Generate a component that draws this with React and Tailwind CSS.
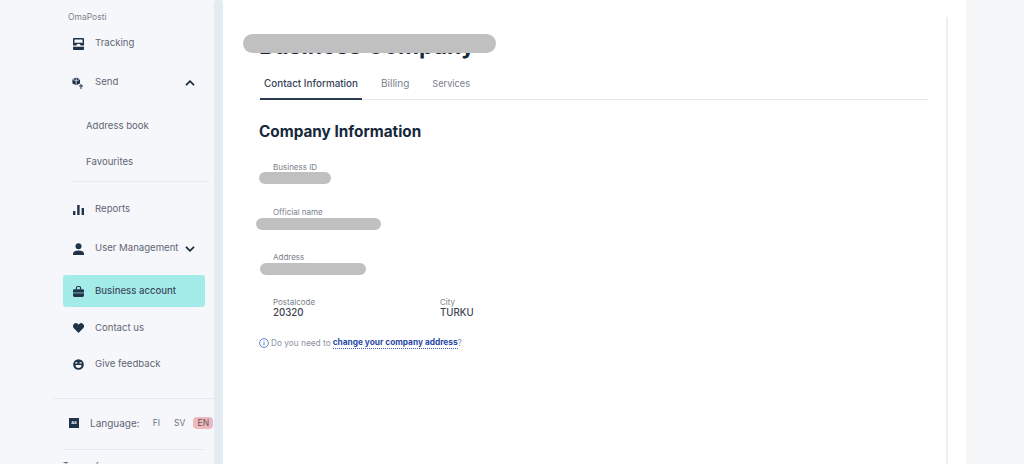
import React from 'react';

const ICON = '#1f3349';

const TrackingIcon = () => (
  <svg width="11" height="12" viewBox="0 0 11 12" fill={ICON}>
    <path d="M1 0h9a1 1 0 0 1 1 1v6.6H7.6L7 6H4L3.4 7.6H0V1a1 1 0 0 1 1-1z" />
    <path d="M1.6 1.4h7.8l.3 3.4H1.3z" fill="#f6f7fb" />
    <path d="M0 8.8h11V11a1 1 0 0 1-1 1H1a1 1 0 0 1-1-1z" />
  </svg>
);

const SendIcon = () => (
  <svg width="12" height="12" viewBox="0 0 12 12" fill={ICON}>
    <path d="M4.2 0.4 8 2.2v4.2L4.2 8.2.4 6.4V2.2z" />
    <path d="M4.2.4v7.8M.4 2.2l3.8 1.8L8 2.2" stroke="#f6f7fb" strokeWidth="0.7" fill="none" />
    <path d="M9.5 7v1.6H11v1H9.5V12h-1V9.6H7v-1h1.5V7z" />
  </svg>
);

const BarsIcon = () => (
  <svg width="11" height="10" viewBox="0 0 11 10" fill={ICON}>
    <rect x="0" y="6" width="2.4" height="4" />
    <rect x="4.2" y="0" width="2.4" height="10" />
    <rect x="8.6" y="3" width="2.4" height="7" />
  </svg>
);

const PersonIcon = () => (
  <svg width="11" height="12" viewBox="0 0 11 12" fill={ICON}>
    <circle cx="5.5" cy="3.2" r="3" />
    <path d="M0 12V10.4C0 8.4 2.5 7.4 5.5 7.4s5.5 1 5.5 3V12z" />
  </svg>
);

const CaseIcon = () => (
  <svg width="11" height="11" viewBox="0 0 11 11" fill={ICON}>
    <path d="M2.8 3.4V2a2 2 0 0 1 2-2h1.4a2 2 0 0 1 2 2v1.4H7.1V2a.9.9 0 0 0-.9-.9H4.8a.9.9 0 0 0-.9.9v1.4z" />
    <path d="M1.4 3.2h8.2A1.4 1.4 0 0 1 11 4.6v5A1.4 1.4 0 0 1 9.6 11H1.4A1.4 1.4 0 0 1 0 9.6v-5a1.4 1.4 0 0 1 1.4-1.4z" />
    <rect x="0" y="6.6" width="11" height="0.7" fill="#a4ecea" />
  </svg>
);

const HeartIcon = () => (
  <svg width="11" height="10" viewBox="0 0 12 11" fill={ICON}>
    <path d="M6 11 .9 5.8A3.1 3.1 0 0 1 5.3 1.2L6 2l.7-.8a3.1 3.1 0 0 1 4.4 4.6z" />
  </svg>
);

const FaceIcon = () => (
  <svg width="11" height="11" viewBox="0 0 12 12">
    <circle cx="6" cy="6" r="5.8" fill={ICON} />
    <rect x="2.4" y="3.6" width="2.6" height="1.4" rx="0.7" fill="#f6f7fb" />
    <rect x="7" y="3.6" width="2.6" height="1.4" rx="0.7" fill="#f6f7fb" />
    <path d="M2.8 6.6h6.4a3.2 3.2 0 0 1-6.4 0z" fill="#f6f7fb" />
  </svg>
);

const Chevron = ({ up }) => (
  <svg width="10" height="6" viewBox="0 0 10 6" fill="none" stroke="#16283a" strokeWidth="1.7">
    <path d={up ? 'M1 5.2 5 1.2l4 4' : 'M1 .8l4 4 4-4'} />
  </svg>
);

const NavRow = ({ icon, label, chevron, height = 'h-[39px]' }) => (
  <div className={`flex w-[132px] items-center ${height}`}>
    <div className="flex w-[32px] justify-center pr-[2px]">{icon}</div>
    <span className="text-[9.6px] text-[#5e6673]">{label}</span>
    {chevron && <div className="ml-auto">{chevron}</div>}
  </div>
);

const Field = ({ label, pill }) => (
  <div className="relative h-[45px] pl-[14px]">
    <div className="text-[8px] leading-[10px] text-[#7a808a]">{label}</div>
    <div className={`absolute h-[12px] rounded-full bg-[#c0c0c0] ${pill}`} />
  </div>
);

export default function App() {
  return (
    <div className="flex h-[464px] w-[1024px] overflow-hidden bg-[#f5f6f8] font-['Inter','Liberation_Sans',sans-serif]">
      <aside className="h-full w-[214px] shrink-0 bg-[#f6f7fb] pt-[12px]">
        <div className="pl-[68px] text-[8.5px] leading-[11px] text-[#7d828c]">OmaPosti</div>
        <div className="mt-[1px] pl-[63px]">
          <NavRow icon={<TrackingIcon />} label="Tracking" />
          <NavRow icon={<SendIcon />} label="Send" chevron={<Chevron up />} />
        </div>
        <div className="ml-[72px] mr-[4px] mt-[6px] border-b border-[#e9ebf1] pb-[1px]">
          <div className="flex h-[36px] items-center pl-[14px] text-[9.6px] text-[#5e6673]">Address book</div>
          <div className="flex h-[36px] items-center pl-[14px] text-[9.6px] text-[#5e6673]">Favourites</div>
        </div>
        <div className="pl-[63px] pt-[8px]">
          <NavRow icon={<BarsIcon />} label="Reports" />
          <NavRow icon={<PersonIcon />} label="User Management" chevron={<Chevron />} />
        </div>
        <div className="ml-[63px] mt-[7px] flex h-[32px] w-[142px] items-center rounded-[3px] bg-[#a4ecea]">
          <div className="flex w-[32px] justify-center pr-[2px]"><CaseIcon /></div>
          <span className="text-[9.6px] font-medium text-[#3c4a5c]">Business account</span>
        </div>
        <div className="mt-[3px] pl-[63px]">
          <NavRow icon={<HeartIcon />} label="Contact us" height="h-[36px]" />
          <NavRow icon={<FaceIcon />} label="Give feedback" height="h-[36px]" />
        </div>
        <div className="ml-[54px] mt-[16px] h-px bg-[#e6e9f0]" />
        <div className="flex h-[50px] items-center pb-[2px] pl-[69px]">
          <div className="flex h-[10px] w-[10px] items-center justify-center bg-[#1f3349] text-[4px] font-bold text-white">Aa</div>
          <span className="ml-[11px] text-[10px] text-[#5e6673]">Language:</span>
          <span className="ml-[13px] text-[8.5px] text-[#6b7280]">FI</span>
          <span className="ml-[14px] text-[8.5px] text-[#6b7280]">SV</span>
          <span className="ml-[8px] flex h-[12px] w-[20px] items-center justify-center rounded-[4px] bg-[#eeb9bd] text-[8.5px] text-[#5e5560]">EN</span>
        </div>
        <div className="ml-[63px] mr-[9px] h-px bg-[#e6e9f0]" />
        <div className="pl-[63px] pt-[10px] text-[8.5px] text-[#5e6673]">Terms of use</div>
      </aside>

      <div className="h-full w-[9px] shrink-0 rounded-t-[4px] bg-[#e5ebf3]" />

      <main className="h-full w-[743px] shrink-0 bg-white pl-[36px] pr-[18px] pt-[17px]">
        <div className="relative h-full border-r-2 border-[#efefef] pr-[18px]">
          <div className="h-[43px] pt-[15px] text-[23px] leading-[28px] font-bold text-[#16283a]">Business Company</div>
          <div className="absolute -left-[16px] top-[17px] h-[19px] w-[253px] rounded-full bg-[#c0c0c0]" />

          <div className="flex h-[40px] border-b border-[#e8e8ea] pl-[1px]">
            <div className="flex h-[40px] items-center border-b-2 border-[#2b3a4d] px-[4px] pt-[8px] text-[9.9px] font-medium text-[#364456]">Contact Information</div>
            <span className="ml-[19px] flex items-center pt-[8px] text-[10px] text-[#7a808a]">Billing</span>
            <span className="ml-[23px] flex items-center pt-[9px] text-[9.2px] text-[#7a808a]">Services</span>
          </div>

          <h2 className="mt-[22px] text-[15.3px] leading-[20px] font-bold text-[#16283a]">Company Information</h2>

          <div className="mt-[20px]">
            <Field label="Business ID" pill="left-0 top-[10px] w-[72px]" />
            <Field label="Official name" pill="-left-[3px] top-[11px] w-[125px]" />
            <Field label="Address" pill="left-[1px] top-[11px] w-[106px]" />
            <div className="flex pl-[14px]">
              <div className="w-[167px]">
                <div className="text-[8px] leading-[10px] text-[#7a808a]">Postalcode</div>
                <div className="text-[9.7px] leading-[12px] font-medium text-[#3d4450]">20320</div>
              </div>
              <div>
                <div className="text-[8px] leading-[10px] text-[#7a808a]">City</div>
                <div className="text-[9.7px] leading-[12px] font-medium text-[#3d4450]">TURKU</div>
              </div>
            </div>
          </div>

          <div className="mt-[17px] flex items-center text-[8.3px] text-[#8a90a0]">
            <svg width="10" height="10" viewBox="0 0 10 10" fill="none" stroke="#4a79c9" strokeWidth="0.9">
              <circle cx="5" cy="5" r="4.4" />
              <path d="M5 4.2v3M5 2.4v1" />
            </svg>
            <span className="ml-[2px]">Do you need to</span>
            <span className="ml-[2px] border-b border-dotted border-[#3a5cb8] font-bold text-[#2a4aa8]">change your company address</span>
            <span>?</span>
          </div>
        </div>
      </main>
    </div>
  );
}
